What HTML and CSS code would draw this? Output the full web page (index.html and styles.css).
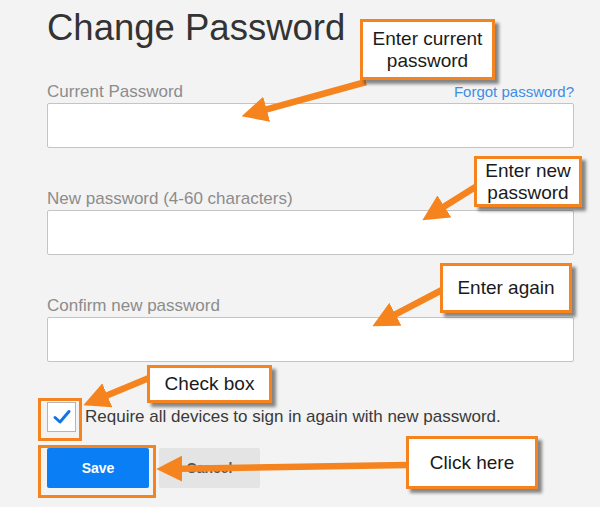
FILE: index.html
```html
<!DOCTYPE html>
<html lang="en">
<head>
    <meta charset="UTF-8">
    <meta name="viewport" content="width=device-width, initial-scale=1.0">
    <title>Change Password</title>
    <link rel="stylesheet" href="styles.css">
</head>
<body>

    <div class="page">
        <main class="form">
            <h1>Change Password</h1>

            <div class="field field-first">
                <div class="field-head">
                    <label for="current">Current Password</label>
                    <a href="#" class="forgot">Forgot password?</a>
                </div>
                <input type="password" id="current" class="text-input">
            </div>

            <div class="field">
                <div class="field-head">
                    <label for="newpass">New password (4-60 characters)</label>
                </div>
                <input type="password" id="newpass" class="text-input">
            </div>

            <div class="field">
                <div class="field-head">
                    <label for="confirm">Confirm new password</label>
                </div>
                <input type="password" id="confirm" class="text-input">
            </div>

            <div class="check-row">
                <span class="check-box">
                    <svg width="20" height="20" viewBox="0 0 20 20"><polyline points="3,10.5 8,15 17,4.5" fill="none" stroke="#1473e6" stroke-width="3" stroke-linecap="round" stroke-linejoin="round"/></svg>
                </span>
                <span class="check-text">Require all devices to sign in again with new password.</span>
            </div>

            <div class="actions">
                <button class="btn btn-save">Save</button>
                <button class="btn btn-cancel">Cancel</button>
            </div>
        </main>

        <!-- annotations drawn over the form -->
        <svg class="marks" width="600" height="507" viewBox="0 0 600 507">
            <defs>
                <marker id="head" markerWidth="4" markerHeight="4" refX="2.5" refY="2" orient="auto" markerUnits="strokeWidth">
                    <path d="M0,0 L4,2 L0,4 z" fill="#f5841f"/>
                </marker>
            </defs>
            <rect x="39.5" y="399.5" width="41" height="40" fill="none" stroke="#f5841f" stroke-width="3"/>
            <rect x="39.5" y="446.5" width="115" height="50" fill="none" stroke="#f5841f" stroke-width="3"/>
            <g stroke="#f5841f" stroke-width="6.5" marker-end="url(#head)">
                <line x1="366" y1="82" x2="251" y2="113.6"/>
                <line x1="477" y1="186" x2="430.6" y2="215.1"/>
                <line x1="442" y1="290" x2="381" y2="321.8"/>
                <line x1="149" y1="378" x2="92.3" y2="401.5"/>
                <line x1="408" y1="465" x2="166" y2="468.9"/>
            </g>
        </svg>

        <div class="note note-current">Enter current<br>password</div>
        <div class="note note-new">Enter new<br>password</div>
        <div class="note note-again">Enter again</div>
        <div class="note note-check">Check box</div>
        <div class="note note-click">Click here</div>
    </div>

</body>
</html>
```

FILE: styles.css
```css
body {
    margin: 0;
    background-color: #f3f3f3;
    font-family: 'Liberation Sans', Arial, sans-serif;
}

.page {
    position: relative;
    width: 600px;
    height: 507px;
    overflow: hidden;
}

.form {
    width: 527px;
    padding-left: 47px;
}

h1 {
    margin: 0;
    padding-top: 8px;
    font-size: 36.5px;
    line-height: 40px;
    font-weight: 400;
    color: #333;
}


.field {
    margin-top: 41px;
}

.field-first {
    margin-top: 34px;
}

.field-head {
    display: flex;
    justify-content: space-between;
    align-items: baseline;
    margin-bottom: 1px;
    line-height: 20px;
}

.field-head label {
    font-size: 17px;
    color: #8c8c8c;
}

.forgot {
    font-size: 15px;
    color: #3d8ee4;
    text-decoration: none;
}

.text-input {
    display: block;
    box-sizing: border-box;
    width: 100%;
    height: 45px;
    margin: 0;
    border: 1px solid #c4c4c4;
    border-radius: 2px;
    background-color: #fff;
}


.check-row {
    display: flex;
    align-items: center;
    gap: 9px;
    margin-top: 40px;
}

.check-box {
    display: flex;
    align-items: center;
    justify-content: center;
    box-sizing: border-box;
    width: 29px;
    height: 30px;
    border: 1px solid #b5b5b5;
    background-color: #fff;
}

.check-text {
    font-size: 17px;
    color: #3a3a3a;
}


.actions {
    display: flex;
    gap: 10px;
    margin-top: 16px;
}

.btn {
    height: 40px;
    border: none;
    border-radius: 2px;
    font-family: 'Liberation Sans', Arial, sans-serif;
    font-size: 14px;
    font-weight: bold;
}

.btn-save {
    width: 102px;
    background-color: #0a7ef5;
    color: #fff;
}

.btn-cancel {
    width: 101px;
    background-color: #e4e4e4;
    color: #555;
}


.marks {
    position: absolute;
    top: 0;
    left: 0;
}

.note {
    position: absolute;
    box-sizing: border-box;
    display: flex;
    align-items: center;
    justify-content: center;
    text-align: center;
    border: 3px solid #f5841f;
    background-color: #fff;
    box-shadow: 4px 4px 3px rgba(0, 0, 0, 0.45);
    font-size: 19px;
    line-height: 22px;
    color: #1a1a1a;
}

.note-current {
    left: 360px;
    top: 19px;
    width: 135px;
    height: 61px;
}

.note-new {
    left: 474px;
    top: 156px;
    width: 108px;
    height: 51px;
}

.note-again {
    left: 440px;
    top: 263px;
    width: 132px;
    height: 50px;
}

.note-check {
    left: 147px;
    top: 365px;
    width: 125px;
    height: 38px;
}

.note-click {
    left: 406px;
    top: 436px;
    width: 132px;
    height: 53px;
}
```
